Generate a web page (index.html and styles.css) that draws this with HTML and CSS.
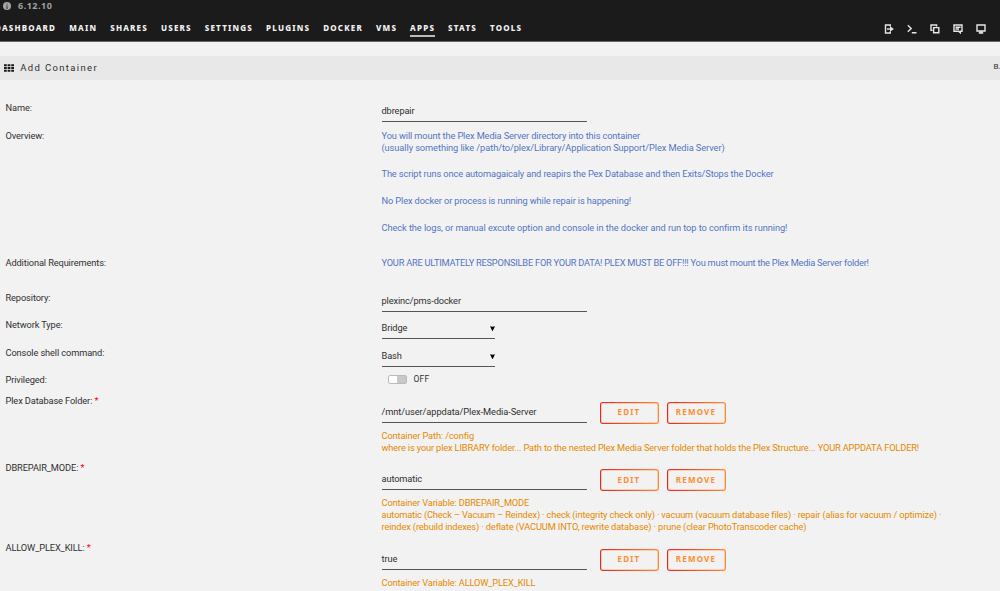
FILE: index.html
```
<!DOCTYPE html>
<html lang="en">
	<head>
		<meta charset="UTF-8">
		<title>Add Container</title>
		<link rel="stylesheet" href="styles.css">
	</head>
	<body>
		<div id="header">
			<div class="version">
				<svg class="info" viewBox="0 0 8 8"><circle cx="4" cy="4" r="4" fill="#a5a5a5"/><path d="M4 1.6v1M4 3.3v3M3.2 6.2h1.7" stroke="#444" stroke-width="1"/></svg>
				<span>6.12.10</span>
			</div>
			<div id="menu">
				<div class="nav">
					<a>DASHBOARD</a>
					<a>MAIN</a>
					<a>SHARES</a>
					<a>USERS</a>
					<a>SETTINGS</a>
					<a>PLUGINS</a>
					<a>DOCKER</a>
					<a>VMS</a>
					<a class="active">APPS</a>
					<a>STATS</a>
					<a>TOOLS</a>
				</div>
				<div class="tools">
					<!-- logout -->
					<svg viewBox="0 0 10 10"><path d="M6.3 2.6V1H1.500v8h4.800V7.400"/><path d="M3 5h4"/><path class="fill" d="M6 2.300L9.900 5L6 7.700z"/></svg>
					<!-- terminal -->
					<svg viewBox="0 0 10 10"><path d="M.8 1.300L4.200 4.500L.8 7.700M4.800 8.700h4.700"/></svg>
					<!-- copy -->
					<svg viewBox="0 0 10 10"><path d="M3.600 3.600h5.200v5.200H3.600zM2.500 6.400H1V1h5.600v1.500"/></svg>
					<!-- feedback -->
					<svg viewBox="0 0 10 10"><path d="M1 1h8v6.200H7.300v1.600L5.500 7.200H1zM2.500 3.200h5M2.500 5h3.500"/></svg>
					<!-- monitor -->
					<svg viewBox="0 0 10 10"><path d="M1 1h8v6H1zM2.800 9h4.400M4 7v2M6 7v2"/></svg>
				</div>
			</div>
		</div>

		<div id="title">
			<span class="left">
				<svg class="grid" viewBox="0 0 10 8"><path d="M0 1.200h10M0 4h10M0 6.800h10" stroke="#1c1b1b" stroke-width="2.100" stroke-dasharray="2.800 .8"/></svg>
				<span>Add Container</span>
			</span>
			<span class="right">B.</span>
		</div>

		<div id="form">
			<div class="row">
				<label>Name:</label>
				<div class="field"><span class="input">dbrepair</span></div>
			</div>
			<div class="row overview">
				<label>Overview:</label>
				<div class="blue">
					<p>You will mount the Plex Media Server directory into this container<br><span class="wide">(usually something like /path/to/plex/Library/Application Support/Plex Media Server)</span></p>
					<p>The script runs once automagaicaly and reapirs the Pex Database and then Exits/Stops the Docker</p>
					<p>No Plex docker or process is running while repair is happening!</p>
					<p class="wide">Check the logs, or manual excute option and console in the docker and run top to confirm its running!</p>
				</div>
			</div>
			<div class="row require">
				<label>Additional Requirements:</label>
				<div class="blue"><p class="caps">YOUR ARE ULTIMATELY RESPONSILBE FOR YOUR DATA! PLEX MUST BE OFF!!! You must mount the Plex Media Server folder!</p></div>
			</div>
			<div class="row">
				<label>Repository:</label>
				<div class="field"><span class="input">plexinc/pms-docker</span></div>
			</div>
			<div class="row">
				<label>Network Type:</label>
				<div class="field"><span class="select">Bridge<svg viewBox="0 0 5 5"><path d="M0 .3L2.500 .7L5 .3L2.700 5H2.300z"/></svg></span></div>
			</div>
			<div class="row">
				<label>Console shell command:</label>
				<div class="field"><span class="select">Bash<svg viewBox="0 0 5 5"><path d="M0 .3L2.500 .7L5 .3L2.700 5H2.300z"/></svg></span></div>
			</div>
			<div class="row privileged">
				<label>Privileged:</label>
				<div class="switch"><span class="track"></span><span class="off">OFF</span></div>
			</div>
			<div class="row path">
				<label>Plex Database Folder: <b>*</b></label>
				<div>
					<div class="field edit"><span class="input wide">/mnt/user/appdata/Plex-Media-Server</span><button>EDIT</button><button>REMOVE</button></div>
					<div class="hint">Container Path: /config<br><span class="tight">where is your plex LIBRARY folder... Path to the nested Plex Media Server folder that holds the Plex Structure... YOUR APPDATA FOLDER!</span></div>
				</div>
			</div>
			<div class="row mode">
				<label>DBREPAIR_MODE: <b>*</b></label>
				<div>
					<div class="field edit"><span class="input">automatic</span><button>EDIT</button><button>REMOVE</button></div>
					<div class="hint"><span class="tight">Container Variable: DBREPAIR_MODE</span><br><span class="tight">automatic (Check – Vacuum – Reindex) · check (integrity check only) · vacuum (vacuum database files) · repair (alias for vacuum / optimize) ·</span><br>reindex (rebuild indexes) · deflate (VACUUM INTO, rewrite database) · prune (clear PhotoTranscoder cache)</div>
				</div>
			</div>
			<div class="row">
				<label>ALLOW_PLEX_KILL: <b>*</b></label>
				<div>
					<div class="field edit"><span class="input">true</span><button>EDIT</button><button>REMOVE</button></div>
					<div class="hint"><span class="tight">Container Variable: ALLOW_PLEX_KILL</span></div>
				</div>
			</div>
		</div>
	</body>
</html>
```
FILE: styles.css
```
*{
	margin: 0;
	padding: 0;
	box-sizing: border-box;
}

body{
	height: 591px;
	overflow: hidden;
	background-color: #f2f2f2;
	color: #303030;
	font-family: Roboto, "Noto Sans", sans-serif;
	font-size: 9.250px;
	letter-spacing: -.120px;
	line-height: 12.2px;
}

/* header */
#header{
	height: 42px;
	background-color: #1c1b1b;
	border-bottom: 1px solid #666;
	overflow: hidden;
}

.version{
	display: flex;
	align-items: center;
	height: 12px;
	padding-left: 3px;
	color: #a0a0a0;
	font-family: "Noto Sans", sans-serif;
	font-size: 9px;
	font-weight: bold;
	letter-spacing: .5px;
}

.info{
	width: 8px;
	height: 8px;
	margin-right: 7px;
}

#menu{
	display: flex;
	justify-content: space-between;
	padding: 10px 14px 0 0;
}

.nav{
	display: flex;
	gap: 13px;
	margin-left: -5px;
}

.nav a{
	height: 15px;
	color: #f2f2f2;
	font-family: "Noto Sans", sans-serif;
	font-size: 8px;
	font-weight: 800;
	letter-spacing: 1.200px;
	white-space: nowrap;
}

.nav .active{
	border-bottom: 2px solid #bbb;
}

.tools{
	display: flex;
	gap: 13px;
	padding-top: 1.500px;
}

.tools svg{
	width: 10px;
	height: 10px;
	fill: none;
	stroke: #e6e6e6;
	stroke-width: 1.4;
}

.tools .fill{
	fill: #e6e6e6;
	stroke: none;
}

/* title bar */
#title{
	display: flex;
	justify-content: space-between;
	height: 24px;
	margin-top: 14px;
	padding-left: 4px;
	background-color: #e8e8e8;
	line-height: 24px;
	overflow: hidden;
}

.left{
	font-size: 9.500px;
	letter-spacing: 1.350px;
}

.grid{
	width: 10px;
	height: 8px;
	margin-right: 2.500px;
	vertical-align: -1px;
}

.right{
	width: 6.500px;
	line-height: 22px;
	font-size: 8px;
}

/* form */
#form{
	padding: 22px 0 0 5.500px;
}

.row{
	display: grid;
	grid-template-columns: 376px 1fr;
	height: 27.500px;
	white-space: nowrap;
}

.row b{
	color: #f00;
	font-weight: normal;
}

.overview{
	height: 127px;
}

.require{
	height: 35px;
}

.privileged{
	height: 20.500px;
}

.path{
	height: 67.500px;
}

.mode{
	height: 79.500px;
}

.blue{
	color: #5475c4;
}

.blue p{
	margin-bottom: 14.500px;
}

.wide{
	letter-spacing: -.075px;
}

.tight{
	letter-spacing: -.145px;
}

.caps{
	letter-spacing: -.220px;
}

.field{
	display: flex;
	height: 20px;
}

.edit{
	height: 28px;
	padding-top: 8px;
}

.input,
.select{
	width: 205px;
	height: 20px;
	padding-top: 3px;
	border-bottom: 1px solid #555;
}

.select{
	display: flex;
	justify-content: space-between;
	width: 113.500px;
}

.select svg{
	width: 5px;
	height: 5px;
	margin-top: 4px;
}

.switch{
	display: flex;
	align-items: center;
	height: 11px;
	padding-left: 6.500px;
}

.track{
	width: 19px;
	height: 9px;
	border: 1px solid #bbb;
	border-radius: 2px;
	background: linear-gradient(to right, #fff 8px, #c8c8c8 8px);
}

.off{
	margin-left: 6.500px;
	font-size: 8.500px;
	letter-spacing: .2px;
}

button{
	width: 59px;
	height: 22px;
	margin: -1px 0 0 8px;
	padding-bottom: 1px;
	border: 1px solid transparent;
	border-radius: 3px;
	background: linear-gradient(#f2f2f2, #f2f2f2) padding-box, linear-gradient(to right, #e22828, #ff8c2f) border-box;
	/* softens the thin gradient border */
	box-shadow: inset 0 0 0 1px rgba(255, 120, 47, .3);
	color: #ff8c2f;
	font-family: "Noto Sans", sans-serif;
	font-size: 8px;
	font-weight: bold;
	letter-spacing: 1.2px;
	line-height: 18px;
}

.input + button{
	margin-left: 13px;
}

.hint{
	padding-top: 7px;
	color: #e68a00;
}
```
